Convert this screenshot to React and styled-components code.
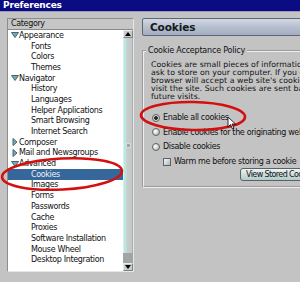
import React from 'react';
import styled, { createGlobalStyle } from 'styled-components';

const GlobalStyle = createGlobalStyle`
  html, body {
    margin: 0;
    padding: 0;
    background: #c3c3c3;
  }
`;

const categories = [
  { label: 'Appearance', level: 0, state: 'open' },
  { label: 'Fonts', level: 1 },
  { label: 'Colors', level: 1 },
  { label: 'Themes', level: 1 },
  { label: 'Navigator', level: 0, state: 'open' },
  { label: 'History', level: 1 },
  { label: 'Languages', level: 1 },
  { label: 'Helper Applications', level: 1 },
  { label: 'Smart Browsing', level: 1 },
  { label: 'Internet Search', level: 1 },
  { label: 'Composer', level: 0, state: 'closed' },
  { label: 'Mail and Newsgroups', level: 0, state: 'closed' },
  { label: 'Advanced', level: 0, state: 'open' },
  { label: 'Cookies', level: 1, selected: true },
  { label: 'Images', level: 1 },
  { label: 'Forms', level: 1 },
  { label: 'Passwords', level: 1 },
  { label: 'Cache', level: 1 },
  { label: 'Proxies', level: 1 },
  { label: 'Software Installation', level: 1 },
  { label: 'Mouse Wheel', level: 1 },
  { label: 'Desktop Integration', level: 1 },
];

const description = [
  'Cookies are small pieces of information that some web sites',
  'ask to store on your computer. If you enable cookies, the',
  "browser will accept a web site's cookies and send them back",
  'visit the site. Such cookies are sent back to the site on',
  'future visits.',
];

function Twisty({ state }) {
  if (state === 'open') {
    return (
      <TwistyBox>
        <svg width="8" height="6" viewBox="0 0 8 6">
          <path d="M0.5 0.5 L7.5 0.5 L4 5.5 Z" fill="#7fa5b0" stroke="#3e6a78" strokeWidth="1" />
        </svg>
      </TwistyBox>
    );
  }
  return (
    <TwistyBox>
      <svg width="6" height="8" viewBox="0 0 6 8">
        <path d="M1 0.5 L5 4 L1 7.5 Z" fill="#7fa5b0" stroke="#3e6a78" strokeWidth="1" />
      </svg>
    </TwistyBox>
  );
}

function App() {
  return (
    <Window>
      <GlobalStyle />
      <TitleBar>Preferences</TitleBar>
      <Main>
        <LeftColumn>
          <TreeBox>
            <TreeHeader>Category</TreeHeader>
            <TreeBody>
              <Rows>
                {categories.map((c) => (
                  <Row key={c.label} $level={c.level} $selected={c.selected}>
                    {c.level === 0 && <Twisty state={c.state} />}
                    {c.label}
                  </Row>
                ))}
              </Rows>
              <Scrollbar>
                <ScrollButton>
                  <svg width="6" height="4" viewBox="0 0 6 4"><path d="M0 4 L3 0 L6 4 Z" fill="#000" /></svg>
                </ScrollButton>
                <Thumb>
                  <Grip />
                </Thumb>
                <Track />
                <ScrollButton>
                  <svg width="6" height="4" viewBox="0 0 6 4"><path d="M0 0 L6 0 L3 4 Z" fill="#000" /></svg>
                </ScrollButton>
              </Scrollbar>
            </TreeBody>
          </TreeBox>
        </LeftColumn>
        <RightColumn>
          <PanelHeader>Cookies</PanelHeader>
          <Group>
            <Legend>Cookie Acceptance Policy</Legend>
            <Description>
              {description.map((line) => (
                <Line key={line}>{line}</Line>
              ))}
            </Description>
            <Option>
              <Radio $checked />
              Enable all cookies
            </Option>
            <Option>
              <Radio />
              Enable cookies for the originating web site only
            </Option>
            <Option>
              <Radio />
              Disable cookies
            </Option>
            <Option $indent>
              <Checkbox />
              Warm me before storing a cookie
            </Option>
            <ButtonRow>
              <Button>View Stored Cookies</Button>
            </ButtonRow>
          </Group>
        </RightColumn>
      </Main>
      <Annotations width="300" height="282" viewBox="0 0 300 282">
        <ellipse cx="62" cy="174" rx="60" ry="15.5" transform="rotate(-3 62 174)" fill="none" stroke="#d40f0f" strokeWidth="2.6" />
        <ellipse cx="193" cy="116" rx="52" ry="14" transform="rotate(1 193 116)" fill="none" stroke="#d40f0f" strokeWidth="2.6" />
        <path d="M228 117 L228 127 L230.5 124.5 L232.5 129 L234 128.3 L232 124 L235.5 124 Z" fill="#fff" stroke="#000" strokeWidth="0.8" />
      </Annotations>
    </Window>
  );
}

const Window = styled.div`
  position: relative;
  width: 300px;
  height: 282px;
  overflow: hidden;
  background: #c3c3c3;
  font-family: "DejaVu Sans", Verdana, sans-serif;
  font-size: 8px;
  letter-spacing: -0.35px;
  color: #111;
`;

const TitleBar = styled.div`
  height: 11px;
  line-height: 11px;
  padding-left: 3px;
  background: #0b0b84;
  color: #fff;
  font-weight: bold;
  font-size: 9px;
  letter-spacing: -0.2px;
  border-bottom: 1px solid #9a9ab8;
`;

const Main = styled.div`
  display: flex;
  gap: 7px;
  padding: 6px 0 0 7px;
`;

const LeftColumn = styled.div`
  width: 127px;
  flex-shrink: 0;
`;

const TreeBox = styled.div`
  height: 254px;
  box-sizing: border-box;
  border: 1px solid #8d8d8d;
  border-right-color: #e6e6e6;
  border-bottom-color: #e6e6e6;
  display: flex;
  flex-direction: column;
`;

const TreeHeader = styled.div`
  height: 10px;
  line-height: 10px;
  padding-left: 3px;
  background: #c6c6c6;
  border-bottom: 1px solid #8a8a8a;
`;

const TreeBody = styled.div`
  flex: 1;
  display: flex;
  background: #fff;
  min-height: 0;
`;

const Rows = styled.div`
  flex: 1;
`;

const Row = styled.div`
  display: flex;
  align-items: center;
  height: 10.7px;
  white-space: nowrap;
  padding-left: ${(p) => (p.$level === 0 ? 2 : 23)}px;
  background: ${(p) => (p.$selected ? '#36679a' : 'transparent')};
  color: ${(p) => (p.$selected ? '#eef2f6' : '#111')};
`;

const TwistyBox = styled.span`
  display: inline-flex;
  align-items: center;
  justify-content: center;
  width: 9px;
`;

const Scrollbar = styled.div`
  width: 10px;
  display: flex;
  flex-direction: column;
  background: #a3a8a8;
`;

const ScrollButton = styled.div`
  height: 8px;
  display: flex;
  align-items: center;
  justify-content: center;
  background: #c9cccc;
  border: 1px solid #e9eded;
  border-right-color: #7d8282;
  border-bottom-color: #7d8282;
  box-sizing: border-box;
`;

const Thumb = styled.div`
  flex: 1;
  display: flex;
  align-items: center;
  justify-content: center;
  background: linear-gradient(90deg, #eaf8f6 0, #b6e8de 12%, #bfe4dc 30%, #c7cccc 40%, #c4c8c8 85%, #9ea4a4 100%);
`;

const Grip = styled.div`
  width: 5px;
  height: 5px;
  background: #a2a6a6;
  border: 1px solid #d6dada;
  box-sizing: border-box;
`;

const Track = styled.div`
  height: 10px;
  background: #a0a5a5;
`;

const RightColumn = styled.div`
  width: 175px;
  flex-shrink: 0;
  padding-left: 1px;
`;

const PanelHeader = styled.div`
  height: 18px;
  box-sizing: border-box;
  line-height: 16px;
  padding-left: 7px;
  border: 1px solid #5c6479;
  border-radius: 2px;
  background: linear-gradient(180deg, #d3d8e2 0%, #b6bfcf 50%, #a3adc0 100%);
  font-weight: bold;
  font-size: 10.5px;
  letter-spacing: -0.1px;
  color: #141820;
`;

const Group = styled.fieldset`
  margin: 10px 0 0;
  padding: 0 0 6px 7px;
  border: 2px groove #f0f0f0;
  border-right: none;
  height: 142px;
  box-sizing: border-box;
`;

const Legend = styled.legend`
  padding: 0 2px;
  margin-left: -5px;
  line-height: 9px;
  letter-spacing: -0.2px;
`;

const Description = styled.div`
  margin-top: 6px;
  margin-bottom: 9px;
  font-size: 7.8px;
  letter-spacing: 0.05px;
`;

const Line = styled.div`
  white-space: nowrap;
  line-height: 8.1px;
`;

const Option = styled.div`
  display: flex;
  align-items: center;
  gap: 3px;
  height: 14.6px;
  white-space: nowrap;
  padding-left: ${(p) => (p.$indent ? 12 : 1)}px;
`;

const Radio = styled.span`
  width: 8px;
  height: 8px;
  border-radius: 50%;
  box-sizing: border-box;
  border: 1px solid #5e6262;
  background: ${(p) =>
    p.$checked
      ? 'radial-gradient(circle, #2a2e2e 0, #2a2e2e 1.6px, #dfe6e6 2.2px, #a9b0b0 100%)'
      : 'radial-gradient(circle at 35% 35%, #ffffff 0, #d2d8d8 50%, #9ca3a3 100%)'};
`;

const Checkbox = styled.span`
  width: 8px;
  height: 8px;
  box-sizing: border-box;
  border: 1px solid #5e6262;
  background: linear-gradient(135deg, #f4f6f6 0%, #cbd1d1 60%, #a8afaf 100%);
`;

const ButtonRow = styled.div`
  display: flex;
  padding-left: 89px;
  margin-top: -1px;
`;

const Button = styled.div`
  height: 13px;
  line-height: 11px;
  box-sizing: border-box;
  padding: 0 5px;
  white-space: nowrap;
  letter-spacing: -0.6px;
  border: 1px solid #5b6060;
  border-radius: 3px;
  background: linear-gradient(180deg, #eef4f4 0%, #cfe0de 45%, #b2cccc 100%);
`;

const Annotations = styled.svg`
  position: absolute;
  left: 0;
  top: 0;
  pointer-events: none;
`;

export default App;
